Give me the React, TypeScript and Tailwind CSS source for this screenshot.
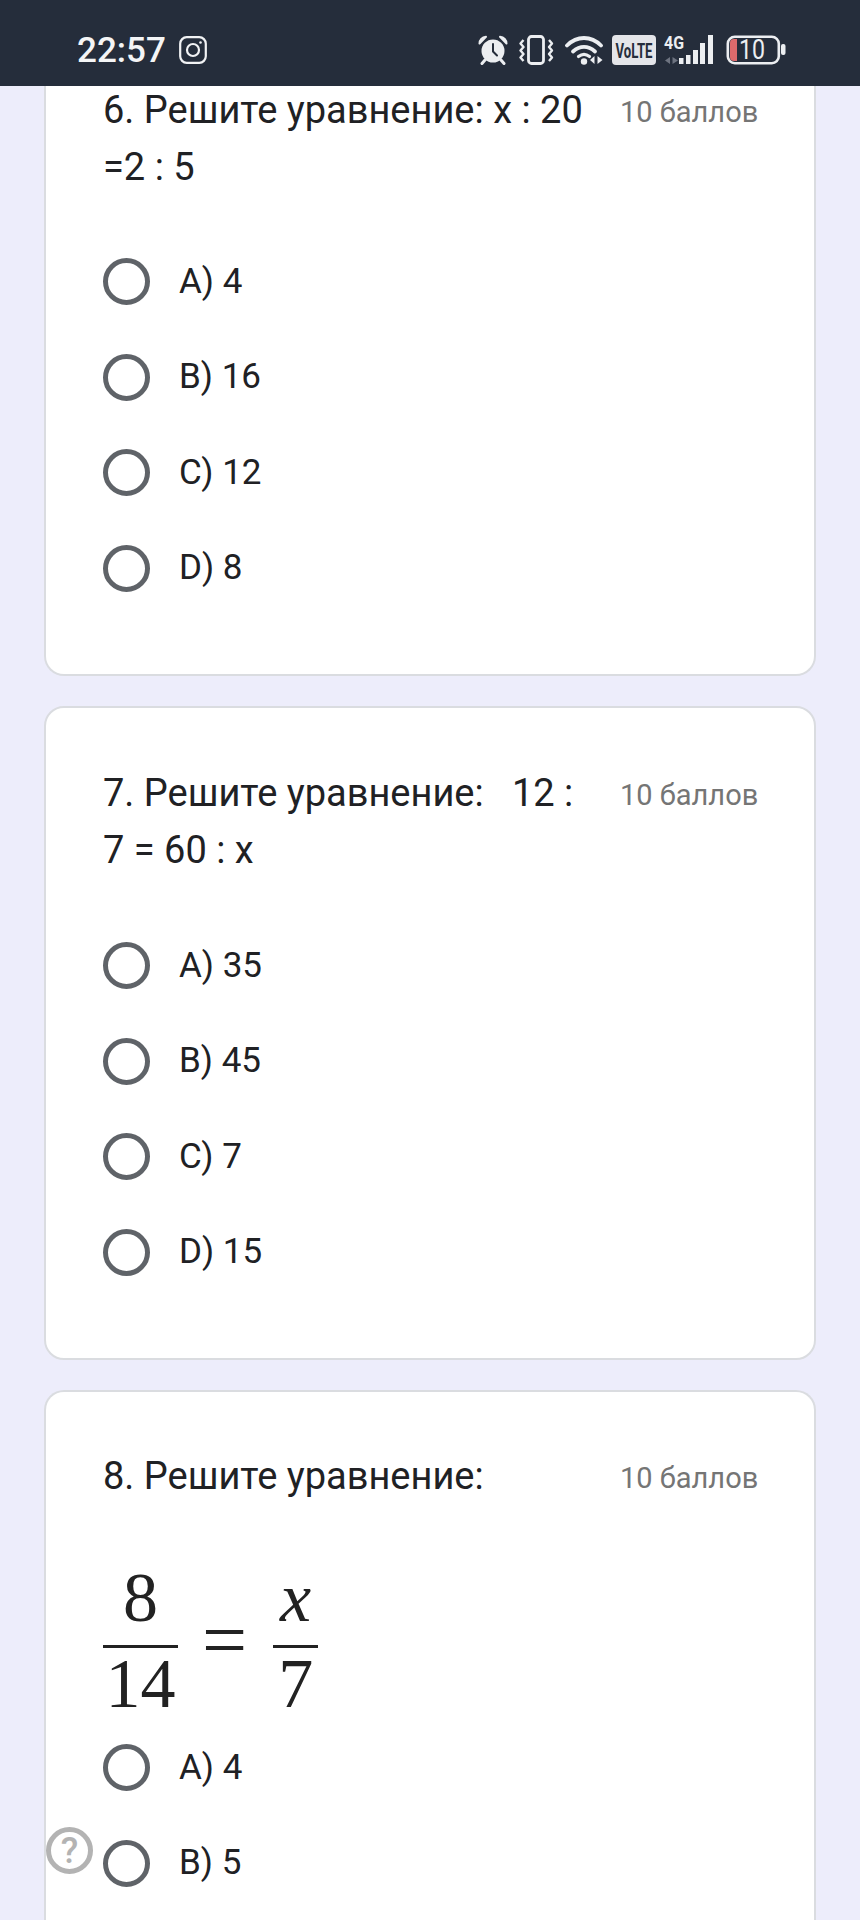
const font = { fontFamily: "Roboto, 'Noto Sans', sans-serif" };

function Alarm() {
  return (
    <svg width="30" height="30" viewBox="0 0 30 30" fill="none">
      <circle cx="15" cy="16" r="11.5" fill="#eceef1" />
      <path d="M15 9v7.5l4 4" stroke="#252d3b" strokeWidth="2" strokeLinecap="round" strokeLinejoin="round" />
      <path d="M1.500 8.500C1.500 5 4 2 8 1.800Z M28.500 8.500C28.500 5 26 2 22 1.800Z" fill="#eceef1" stroke="#eceef1" strokeWidth="2" strokeLinejoin="round" />
      <path d="M7 25l-3 3.500M23 25l3 3.500" stroke="#eceef1" strokeWidth="3" strokeLinecap="round" />
    </svg>
  );
}

function Vibrate() {
  return (
    <svg width="35" height="30" viewBox="0 0 35 30" fill="none" stroke="#eceef1">
      <rect x="9.500" y="1.500" width="15" height="27" rx="3" strokeWidth="2.800" />
      <path d="M4.500 5 1.500 8.500 4.500 12 1.500 15.500 4.500 19 1.500 22.500 4.500 26" strokeWidth="2.400" strokeLinejoin="round" />
      <path d="M30 5l3 3.500-3 3.500 3 3.500-3 3.500 3 3.500-3 3.500" strokeWidth="2.400" strokeLinejoin="round" />
    </svg>
  );
}

function Wifi() {
  return (
    <svg width="40" height="30" viewBox="0 0 40 30" fill="none">
      <path d="M2 10.500C12 0.500 26 0.500 36 10.500" stroke="#eceef1" strokeWidth="3.800" strokeLinecap="round" />
      <path d="M8 16.500c7-6 15-6 22 0" stroke="#eceef1" strokeWidth="3.800" strokeLinecap="round" />
      <path d="M13.500 21.500c3.500-2.800 7.500-2.800 11 0" stroke="#eceef1" strokeWidth="3.200" strokeLinecap="round" />
      <circle cx="19" cy="26.500" r="3.200" fill="#eceef1" />
      <path d="M29.500 21v8l-4.500-4zM32.500 21v8l5-4z" fill="#eceef1" />
    </svg>
  );
}

function VoLte() {
  return (
    <svg width="44" height="30" viewBox="0 0 44 30" className="overflow-visible">
      <rect width="44" height="30" rx="4" fill="#e4e5e9" />
      <text x="3.500" y="22.500" fontSize="21" fontWeight="700" fill="#252d3b" textLength="37" lengthAdjust="spacingAndGlyphs" style={font}>VoLTE</text>
    </svg>
  );
}

function Signal() {
  return (
    <svg width="50" height="30" viewBox="0 0 50 30" className="overflow-visible">
      <text x="0" y="14" fontSize="19" fontWeight="700" fill="#eceef1" textLength="20" lengthAdjust="spacingAndGlyphs" style={font}>4G</text>
      <path d="M6 22v7l-5-3.500zM8.500 22v7l5.500-3.500z" fill="#6d7380" />
      <rect x="15" y="23" width="4.500" height="6" fill="#eceef1" />
      <rect x="22" y="20" width="4.500" height="9" fill="#eceef1" />
      <rect x="29" y="15" width="5" height="14" fill="#eceef1" />
      <rect x="36" y="8" width="5" height="21" fill="#eceef1" />
      <rect x="44" y="0" width="5" height="29" fill="#eceef1" />
    </svg>
  );
}

function Battery() {
  return (
    <svg width="60" height="30" viewBox="0 0 60 30" className="overflow-visible">
      <rect x="1.800" y="1.800" width="51" height="26.400" rx="7" fill="none" stroke="#eceef1" strokeWidth="2.600" />
      <path d="M11 4H8a4 4 0 0 0-4 4v14a4 4 0 0 0 4 4h3z" fill="#dd6a6c" />
      <text x="13" y="24" fontSize="28" fill="#eceef1" textLength="26" lengthAdjust="spacingAndGlyphs" style={font}>10</text>
      <rect x="55" y="9" width="4.500" height="11" rx="2" fill="#eceef1" />
    </svg>
  );
}

function Instagram() {
  return (
    <svg width="28" height="28" viewBox="0 0 28 28" fill="none" stroke="#f1f2f4" strokeWidth="2.200">
      <rect x="1.200" y="1.200" width="25.600" height="25.600" rx="6.500" />
      <circle cx="14" cy="14" r="6" />
      <circle cx="21.500" cy="6.500" r="1.300" fill="#f1f2f4" stroke="none" />
    </svg>
  );
}

function Option({ label }: { label: string }) {
  return (
    <div className="flex h-[95.5px] items-center">
      <span className="box-border size-[47px] shrink-0 rounded-full border-[5px] border-[#5f6368]" />
      <span className="ml-[29px] text-[35px] text-[#202124]">{label}</span>
    </div>
  );
}

function Header({ lines }: { lines: string[] }) {
  return (
    <div className="flex items-start">
      <div className="w-[517px] text-[38px] leading-[57px] text-[#202124]">
        {lines.map((l) => (
          <div key={l} className="whitespace-pre">{l}</div>
        ))}
      </div>
      <div className="pt-[2px] text-[29px] leading-[57px] text-[#757575]">10 баллов</div>
    </div>
  );
}

function Frac({ top, bottom, lineW, italic }: { top: string; bottom: string; lineW: string; italic?: boolean }) {
  return (
    <div className={`flex flex-col items-center ${lineW}`}>
      <span className={`h-[82px] text-[70px] leading-[70px] ${italic ? "italic" : ""}`}>{top}</span>
      <span className="h-[3px] w-full bg-[#222]" />
      <span className="mt-[1px] h-[62px] text-[70px] leading-[70px]">{bottom}</span>
    </div>
  );
}

export default function App() {
  return (
    <div className="relative h-[1920px] w-[860px] overflow-hidden bg-[#ededfb]" style={font}>
      <header className="relative z-10 flex h-[86px] items-center bg-[#252d3b] pt-[14px] text-[#f4f5f6]">
        <span className="ml-[77px] text-[35px] font-medium leading-none">22:57</span>
        <span className="ml-[13px] flex"><Instagram /></span>
        <div className="ml-[271px] flex items-center">
          <Alarm />
          <span className="ml-[11px] flex"><Vibrate /></span>
          <span className="ml-[11px] flex"><Wifi /></span>
          <span className="ml-[7px] flex"><VoLte /></span>
          <span className="ml-[8px] flex"><Signal /></span>
          <span className="ml-[12px] flex"><Battery /></span>
        </div>
      </header>

      <main className="mx-[44px] flex w-[772px] flex-col gap-[30px]">
        <section className="-mt-[4px] rounded-b-[20px] border-2 border-t-0 border-[#dadce0] bg-white pb-[58px] pl-[57px] pt-0">
          <Header lines={["6. Решите уравнение: x : 20", "=2 : 5"]} />
          <div className="mt-[38px]">
            <Option label="A) 4" />
            <Option label="B) 16" />
            <Option label="C) 12" />
            <Option label="D) 8" />
          </div>
        </section>

        <section className="rounded-[20px] border-2 border-[#dadce0] bg-white pb-[58px] pl-[57px] pt-[57px]">
          <Header lines={["7. Решите уравнение:   12 :", "7 = 60 : x"]} />
          <div className="mt-[39px]">
            <Option label="A) 35" />
            <Option label="B) 45" />
            <Option label="C) 7" />
            <Option label="D) 15" />
          </div>
        </section>

        <section className="rounded-t-[20px] border-2 border-b-0 border-[#dadce0] bg-white pb-[58px] pl-[57px] pt-[56px]">
          <Header lines={["8. Решите уравнение:"]} />
          <div className="mt-[56px] flex items-start text-[#222]" style={{ fontFamily: "'Liberation Serif', serif" }}>
            <Frac top="8" bottom="14" lineW="w-[75px]" />
            <span className="ml-[24px] mt-[42px] text-[80px] leading-[70px]">=</span>
            <span className="ml-[26px]"><Frac top="x" bottom="7" lineW="w-[45px]" italic /></span>
          </div>
          <div className="mt-[9px]">
            <Option label="A) 4" />
            <Option label="B) 5" />
          </div>
        </section>
      </main>

      <div className="absolute left-[46px] top-[1827px] flex size-[47px] items-center justify-center rounded-full border-[5px] border-[#b3b3b3] bg-white/40 text-[36px] font-medium leading-none text-[#b3b3b3]">?</div>
    </div>
  );
}
